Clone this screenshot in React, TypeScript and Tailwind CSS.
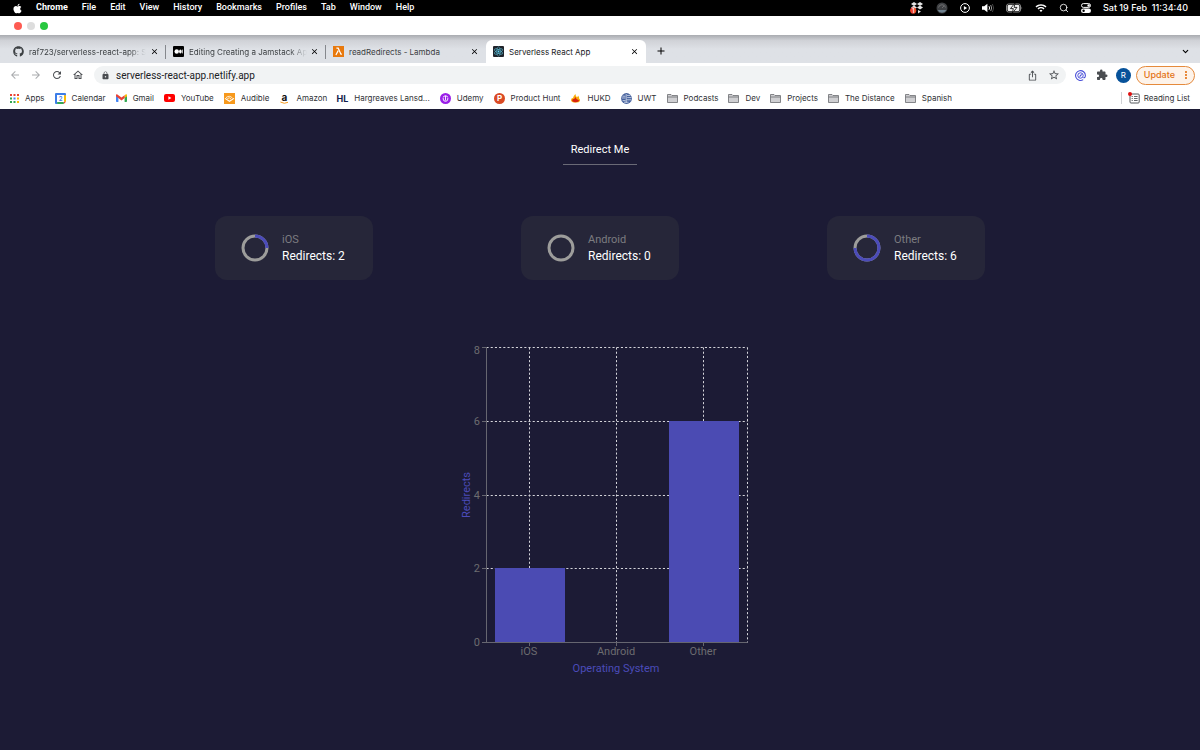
import type { ReactNode } from "react";
import { FaApple, FaGithub } from "react-icons/fa";
import {
  MdArrowBack,
  MdArrowForward,
  MdRefresh,
  MdLock,
  MdExtension,
  MdStarBorder,
  MdIosShare,
  MdOutlineHome,
  MdWifi,
  MdMoreVert,
  MdClose,
  MdAdd,
} from "react-icons/md";
import { ChevronDown, Search } from "lucide-react";

const menus = ["File", "Edit", "View", "History", "Bookmarks", "Profiles", "Tab", "Window", "Help"];

const stats = [
  { name: "iOS", redirects: 2 },
  { name: "Android", redirects: 0 },
  { name: "Other", redirects: 6 },
];

const total = stats.reduce((sum, s) => sum + s.redirects, 0);

/* Menu bar icons */

function DropboxIcon() {
  return (
    <svg className="h-3 w-[14px]" viewBox="0 0 14 12" aria-hidden="true">
      <path
        d="M4 0l3 2-3 2-3-2zM10 0l3 2-3 2-3-2zM4 3.6l3 2-3 2-3-2zM10 3.6l3 2-3 2-3-2zM8 8l3 1.4L8 11.4z"
        fill="#e5e5e5"
      />
      <circle cx="3.2" cy="8.6" r="3.1" fill="#f0442c" />
      <text x="3.2" y="10.7" fontSize="6" textAnchor="middle" fill="#fff">
        1
      </text>
    </svg>
  );
}

function GaugeIcon() {
  return (
    <svg className="h-3 w-3" viewBox="0 0 12 12" aria-hidden="true">
      <circle cx="6" cy="6" r="5.5" fill="#3f4144" />
      <path d="M1.6 8h8.8A5 5 0 0 1 1.6 8z" fill="#6f8290" />
      <path d="M2.5 5.5a3.6 3.6 0 0 1 7 0M6 6l2-2" stroke="#777" strokeWidth=".8" fill="none" />
    </svg>
  );
}

function PlayIcon() {
  return (
    <svg className="h-[10px] w-[10px]" viewBox="0 0 10 10" aria-hidden="true">
      <circle cx="5" cy="5" r="4.4" fill="none" stroke="#fff" />
      <path d="M3.9 3L7.1 5 3.9 7z" fill="#fff" />
    </svg>
  );
}

function VolumeIcon() {
  return (
    <svg className="h-[10px] w-3" viewBox="0 0 12 10" fill="none" aria-hidden="true">
      <path d="M0 3.3h2.2L5.4.8v8.4L2.2 6.7H0z" fill="#fff" />
      <path d="M7 3.2q1.2 1.8 0 3.6" stroke="#fff" />
      <path d="M8.7 2q2 3 0 6" stroke="#999" />
      <path d="M10.4 1q2.6 4 0 8" stroke="#555" strokeWidth=".8" />
    </svg>
  );
}

function BatteryIcon() {
  return (
    <svg className="h-[10px] w-[17px]" viewBox="0 0 17 10" aria-hidden="true">
      <rect x=".5" y="1" width="14" height="8" rx="2" fill="none" stroke="#888" />
      <rect x="1.6" y="2.1" width="11.8" height="5.8" rx="1" fill="#eee" />
      <path d="M9 0L4.5 5.6h2.8L6.4 10 11 4.4H8.1z" fill="#fff" stroke="#000" strokeWidth=".8" />
      <path d="M15.5 3.5q1.4 1.5 0 3z" fill="#888" />
    </svg>
  );
}

function ControlCenterIcon() {
  return (
    <svg className="h-[10px] w-[10px]" viewBox="0 0 10 10" aria-hidden="true">
      <rect x=".5" y=".6" width="9" height="3.8" rx="1.9" fill="none" stroke="#fff" />
      <circle cx="7.6" cy="2.5" r="1.2" fill="#fff" />
      <rect x="0" y="5.4" width="10" height="4.6" rx="2.3" fill="#fff" />
      <circle cx="2.6" cy="7.7" r="1.2" fill="#000" />
    </svg>
  );
}

/* Tab favicons */

function MediumIcon() {
  return (
    <svg className="h-[11px] w-[11px]" viewBox="0 0 11 11" aria-hidden="true">
      <rect width="11" height="11" rx="1" />
      <circle cx="3.7" cy="5.5" r="2.2" fill="#fff" />
      <ellipse cx="7.4" cy="5.5" rx="1.3" ry="2.1" fill="#fff" />
      <rect x="9.1" y="3.6" width=".7" height="3.8" fill="#fff" />
    </svg>
  );
}

function LambdaIcon() {
  return (
    <svg className="h-[11px] w-[11px]" viewBox="0 0 11 11" aria-hidden="true">
      <rect width="11" height="11" fill="#e8790d" />
      <path d="M3.4 2.2h1.8l2.7 6h1M5.2 4.6L2.9 9" fill="none" stroke="#fff" strokeWidth="1.2" />
    </svg>
  );
}

function ReactIcon() {
  return (
    <svg className="h-[11px] w-[11px]" viewBox="0 0 11 11" aria-hidden="true">
      <rect width="11" height="11" rx="1" fill="#20232a" />
      <g fill="none" stroke="#56b6cf" strokeWidth=".6">
        <ellipse cx="5.5" cy="5.5" rx="4.6" ry="1.8" transform="rotate(30 5.5 5.5)" />
        <ellipse cx="5.5" cy="5.5" rx="4.6" ry="1.8" transform="rotate(90 5.5 5.5)" />
        <ellipse cx="5.5" cy="5.5" rx="4.6" ry="1.8" transform="rotate(150 5.5 5.5)" />
      </g>
      <circle cx="5.5" cy="5.5" r=".9" fill="#61dafb" />
    </svg>
  );
}

/* Bookmark icons */

function AppsIcon() {
  const colors = ["#ea4335", "#ea4335", "#ea4335", "#34a853", "#4285f4", "#fbbc04", "#34a853", "#34a853", "#fbbc04"];
  return (
    <svg className="h-[9px] w-[9px]" viewBox="0 0 9 9" aria-hidden="true">
      {colors.map((c, i) => (
        <rect key={i} x={(i % 3) * 3.5} y={Math.floor(i / 3) * 3.5} width="2" height="2" fill={c} />
      ))}
    </svg>
  );
}

function CalendarIcon() {
  return (
    <svg className="h-[11px] w-[11px]" viewBox="0 0 11 11" aria-hidden="true">
      <path d="M0 1a1 1 0 0 1 1-1h9a1 1 0 0 1 1 1v1.8H2.6V11H1a1 1 0 0 1-1-1z" fill="#3c7de8" />
      <path d="M9 2.2h2v6.6H9z" fill="#fbbc04" />
      <path d="M2.2 9h6.6v2H2.2z" fill="#34a853" />
      <path d="M8.8 8.8H11L8.8 11z" fill="#ea4335" />
      <path d="M2 2h7v7H2z" fill="#fff" />
      <text x="5.5" y="7.8" fontSize="6" fontWeight="600" textAnchor="middle" fill="#3c7de8">
        2
      </text>
    </svg>
  );
}

function GmailIcon() {
  return (
    <svg className="h-2 w-[11px]" viewBox="0 0 11 8" aria-hidden="true">
      <path d="M0 1.2L2.4 3v5H.8A.8.8 0 0 1 0 7.2z" fill="#4285f4" />
      <path d="M11 1.2L8.6 3v5h1.6a.8.8 0 0 0 .8-.8z" fill="#34a853" />
      <path d="M8.6 1.2L10 .2q1-.3 1 .9v1.2L8.6 4z" fill="#fbbc04" />
      <path d="M0 1.1Q0-.1 1 .2l4.5 3.4L8.6 1.2V4L5.5 6.4 0 2.3z" fill="#ea4335" />
    </svg>
  );
}

function YouTubeIcon() {
  return (
    <svg className="h-2 w-[11px]" viewBox="0 0 11 8" aria-hidden="true">
      <rect width="11" height="8" rx="2" fill="#f00" />
      <path d="M4.4 2.2L7.4 4l-3 1.8z" fill="#fff" />
    </svg>
  );
}

function AudibleIcon() {
  return (
    <svg className="h-[11px] w-[11px]" viewBox="0 0 11 11" aria-hidden="true">
      <rect width="11" height="11" fill="#f7991c" />
      <path d="M1 5.4l4.5 2.9L10 5.4" fill="none" stroke="#fff" strokeWidth="1.1" />
      <path d="M2 4.7q3.4-3 6.6.5M3.4 5.5q2.2-1.6 3.8.6" fill="none" stroke="#fff" strokeWidth=".8" />
    </svg>
  );
}

function AmazonIcon() {
  return (
    <svg className="h-[11px] w-[11px] overflow-visible" viewBox="0 0 11 11" aria-hidden="true">
      <text x="5.5" y="7.5" fontSize="10" fontWeight="700" textAnchor="middle" fill="#111">
        a
      </text>
      <path d="M1.4 9q4 2.4 7.6.3" fill="none" stroke="#f79b1e" strokeWidth="1" />
    </svg>
  );
}

function HlIcon() {
  return (
    <svg className="h-[11px] w-[11px] overflow-visible" viewBox="0 0 11 11" aria-hidden="true">
      <text x="5.5" y="9" fontSize="9" fontWeight="700" textAnchor="middle" fill="#12204d">
        HL
      </text>
    </svg>
  );
}

function UdemyIcon() {
  return (
    <svg className="h-[11px] w-[11px]" viewBox="0 0 11 11" aria-hidden="true">
      <circle cx="5.5" cy="5.5" r="5.5" fill="#9a1fe8" />
      <path d="M3.2 4.6V6a2.3 2.3 0 0 0 4.6 0V4.6M5.5 7.5V3M3.2 3.8l2.3-1.2 2.3 1.2" fill="none" stroke="#fff" strokeWidth=".9" />
    </svg>
  );
}

function ProductHuntIcon() {
  return (
    <svg className="h-[11px] w-[11px]" viewBox="0 0 11 11" aria-hidden="true">
      <circle cx="5.5" cy="5.5" r="5.5" fill="#da4a24" />
      <text x="5.7" y="8.4" fontSize="8" fontWeight="700" textAnchor="middle" fill="#fff">
        P
      </text>
    </svg>
  );
}

function HukdIcon() {
  return (
    <svg className="h-[9px] w-[11px]" viewBox="0 0 11 9" aria-hidden="true">
      <path d="M1 6.2Q1 4 3 4 3.4 2 5.4 0q.3 2.4 1.6 3.2Q8 2.6 8 1.6q1.4 1.6 1.2 3.2Q10.4 5.4 10 7 9 8.8 5.6 8.6 1.2 8.6 1 6.2z" fill="#f9ae0c" />
      <path d="M2 6.2Q2.6 4.6 4.2 5 5 3.6 5.6 3q.4 2 1.6 2.4Q9.2 5.2 9 7 7 8.4 4.8 8.2 2 7.8 2 6.2z" fill="#d8220f" />
    </svg>
  );
}

function UwtIcon() {
  return (
    <svg className="h-[11px] w-[11px]" viewBox="0 0 11 11" aria-hidden="true">
      <circle cx="5.5" cy="5.5" r="5.4" fill="#46619d" />
      <path d="M1.4 3.2h3M.8 5h3.6M6 2.4h3.4M6.2 4.6h4.2M5.4 6.8h4.6M1.6 7.6h3M3 9.2h4.6M5.2 1v9" fill="none" stroke="#d8e0ef" strokeWidth=".8" />
    </svg>
  );
}

function FolderIcon() {
  return (
    <svg className="h-[9px] w-[11px]" viewBox="0 0 11 9" aria-hidden="true">
      <path d="M.5 8.5v-8H4l1 1h5.5v7z" fill="#cfcfd2" stroke="#6b6c70" strokeWidth=".8" />
      <path d="M.5 3h10" stroke="#6b6c70" strokeWidth=".8" />
    </svg>
  );
}

function ReadingListIcon() {
  return (
    <svg className="h-3 w-3" viewBox="0 0 12 12" aria-hidden="true">
      <rect x="2" y="2" width="9.2" height="9" rx="1" fill="none" stroke="#55585c" />
      <path d="M6 4.5h3.6M6 6.5h3.6M6 8.5h3.6M3.6 4.5h1.2M3.6 6.5h1.2M3.6 8.5h1.2" stroke="#55585c" strokeWidth=".9" />
      <circle cx="2" cy="2" r="2" fill="#e01010" />
    </svg>
  );
}

function SwirlIcon() {
  return (
    <svg className="h-[11px] w-[11px]" viewBox="0 0 11 11" fill="none" stroke="#4a50d8" aria-hidden="true">
      <path d="M8.2 9.6A4.9 4.9 0 1 1 10.4 5.5Q10.3 8 8.4 7.6" strokeWidth="1.1" />
      <circle cx="5.5" cy="5.5" r="2.7" />
      <path d="M6.6 4.4L4.6 6.6" strokeWidth="1.2" />
    </svg>
  );
}

const bookmarks: { label: string; icon: ReactNode }[] = [
  { label: "Apps", icon: <AppsIcon /> },
  { label: "Calendar", icon: <CalendarIcon /> },
  { label: "Gmail", icon: <GmailIcon /> },
  { label: "YouTube", icon: <YouTubeIcon /> },
  { label: "Audible", icon: <AudibleIcon /> },
  { label: "Amazon", icon: <AmazonIcon /> },
  { label: "Hargreaves Lansd...", icon: <HlIcon /> },
  { label: "Udemy", icon: <UdemyIcon /> },
  { label: "Product Hunt", icon: <ProductHuntIcon /> },
  { label: "HUKD", icon: <HukdIcon /> },
  { label: "UWT", icon: <UwtIcon /> },
  { label: "Podcasts", icon: <FolderIcon /> },
  { label: "Dev", icon: <FolderIcon /> },
  { label: "Projects", icon: <FolderIcon /> },
  { label: "The Distance", icon: <FolderIcon /> },
  { label: "Spanish", icon: <FolderIcon /> },
];

const tabs: { title: string; icon: ReactNode; active?: boolean; faded?: boolean }[] = [
  { title: "raf723/serverless-react-app: S", icon: <FaGithub className="h-[11px] w-[11px]" />, faded: true },
  { title: "Editing Creating a Jamstack Ap", icon: <MediumIcon />, faded: true },
  { title: "readRedirects - Lambda", icon: <LambdaIcon /> },
  { title: "Serverless React App", icon: <ReactIcon />, active: true },
];

function MenuBar() {
  return (
    <header className="flex h-4 items-center bg-black px-3 text-[9px] font-medium text-white">
      <FaApple className="h-[11px] w-[11px]" />
      <nav className="ml-[13px] flex items-center gap-[14px] font-['Roboto','Liberation_Sans',sans-serif]">
        <span className="font-bold">Chrome</span>
        {menus.map((m) => (
          <span key={m}>{m}</span>
        ))}
      </nav>
      <div className="ml-auto flex items-center gap-3">
        <DropboxIcon />
        <GaugeIcon />
        <PlayIcon />
        <VolumeIcon />
        <BatteryIcon />
        <MdWifi className="h-3 w-3" />
        <Search className="h-[10px] w-[10px]" />
        <ControlCenterIcon />
        <time className="whitespace-pre">Sat 19 Feb  11:34:40</time>
      </div>
    </header>
  );
}

function TabStrip() {
  return (
    <div className="flex h-7 items-end bg-linear-to-b from-[#a9abb0] via-[#d0d2d7] via-20% to-[#dee1e6] to-50% pl-[6px] text-[8px] text-[#3c4043]">
      {tabs.map((t) => (
        <div
          key={t.title}
          className={
            t.active
              ? "flex h-[23px] w-40 items-center rounded-t-md bg-white px-[7px] text-[#202124]"
              : "flex h-[23px] w-40 items-center px-[7px]"
          }
        >
          {t.icon}
          <span className={t.faded ? "ml-[5px] mask-r-from-85% whitespace-nowrap" : "ml-[5px] whitespace-nowrap"}>
            {t.title}
          </span>
          <button type="button" aria-label="Close tab" className="ml-auto text-black">
            <MdClose className="h-[9px] w-[9px]" />
          </button>
          {t.faded && <span className="-mr-[7px] ml-[6px] h-[14px] w-px bg-[#85888d]" />}
        </div>
      ))}
      <button type="button" aria-label="New tab" className="mb-[6px] ml-[9px] text-black">
        <MdAdd className="h-3 w-3" />
      </button>
      <button type="button" aria-label="Search tabs" className="mr-[10px] mb-[7px] ml-auto text-black">
        <ChevronDown className="h-[9px] w-[9px]" strokeWidth={3} />
      </button>
    </div>
  );
}

function Toolbar() {
  return (
    <div className="flex h-6 items-center bg-white pr-[5px] pl-[9px] text-[#4a4d51]">
      <div className="flex gap-[9px]">
        <button type="button" aria-label="Back" className="text-[#a9abae]">
          <MdArrowBack className="h-3 w-3" />
        </button>
        <button type="button" aria-label="Forward" className="text-[#a9abae]">
          <MdArrowForward className="h-3 w-3" />
        </button>
        <button type="button" aria-label="Reload">
          <MdRefresh className="h-3 w-3" />
        </button>
        <button type="button" aria-label="Home">
          <MdOutlineHome className="h-3 w-3" />
        </button>
      </div>
      <div className="ml-[10px] flex h-[18px] flex-1 items-center rounded-full bg-[#f1f3f4] pr-[6px] pl-[7px]">
        <MdLock className="h-[9px] w-[9px]" />
        <input
          type="text"
          aria-label="Address"
          defaultValue="serverless-react-app.netlify.app"
          className="ml-[6px] flex-1 bg-transparent font-['Roboto','Liberation_Sans',sans-serif] text-[10px] text-[#202124] outline-none"
        />
        <button type="button" aria-label="Share">
          <MdIosShare className="h-[11px] w-[11px]" />
        </button>
        <button type="button" aria-label="Bookmark this page" className="ml-[10px]">
          <MdStarBorder className="h-3 w-3" />
        </button>
      </div>
      <div className="ml-[9px] flex items-center">
        <SwirlIcon />
        <MdExtension className="ml-[10px] h-3 w-3" />
        <span className="ml-2 flex h-[15px] w-[15px] items-center justify-center rounded-full bg-[#07529a] text-[8px] text-white">
          R
        </span>
        <button
          type="button"
          className="ml-[5px] flex h-[19px] items-center rounded-full border border-[#e58a3c] bg-[#fdf3ea] pr-[2px] pl-[7px] text-[9px] font-medium text-[#e37214]"
        >
          Update
          <MdMoreVert className="ml-[5px] h-3 w-3" />
        </button>
      </div>
    </div>
  );
}

function BookmarksBar() {
  return (
    <nav className="flex h-[22px] items-center bg-white px-[10px] text-[8px] text-[#303236]">
      <div className="flex items-center gap-[10px]">
        {bookmarks.map((b) => (
          <a key={b.label} href="#" className="flex items-center gap-[6px] whitespace-nowrap">
            {b.icon}
            {b.label}
          </a>
        ))}
      </div>
      <a href="#" className="ml-auto flex items-center gap-1 border-l border-[#d0d2d5] pl-[6px] whitespace-nowrap">
        <ReadingListIcon />
        Reading List
      </a>
    </nav>
  );
}

function Ring({ value }: { value: number }) {
  return (
    <svg className="h-7 w-7" viewBox="0 0 28 28" fill="none" strokeWidth="3" aria-hidden="true">
      <circle cx="14" cy="14" r="12" stroke="#9d9d9b" />
      {value > 0 && (
        <circle
          cx="14"
          cy="14"
          r="12"
          stroke="#4b4bb9"
          pathLength={100}
          strokeDasharray={`${value} 100`}
          transform="rotate(-90 14 14)"
        />
      )}
    </svg>
  );
}

function StatCard({ name, redirects }: { name: string; redirects: number }) {
  return (
    <div className="flex h-16 w-[158px] items-center gap-[13px] rounded-xl bg-[#262639] pl-[26px]">
      <Ring value={(redirects / total) * 100} />
      <div>
        <p className="text-[11px] leading-4 text-[#7c7c80]">{name}</p>
        <p className="text-xs leading-4 text-white">Redirects: {redirects}</p>
      </div>
    </div>
  );
}

function RedirectsChart() {
  const left = 30;
  const right = 291;
  const top = 8;
  const bottom = 303;
  const band = (right - left) / stats.length;
  const y = (v: number) => Math.round(bottom - (v / 8) * (bottom - top));
  const x = (i: number) => Math.floor(left + band * (i + 0.5));

  return (
    <svg
      className="h-[345px] w-[300px] text-[11px]"
      viewBox="0 0 300 345"
      role="img"
      aria-label="Redirects by operating system"
    >
      <g stroke="#d4d4da" strokeDasharray="2.1 2.1" transform="translate(0.5 0.5)">
        {[2, 4, 6, 8].map((v) => (
          <line key={v} x1={left} x2={right} y1={y(v)} y2={y(v)} />
        ))}
        {stats.map((s, i) => (
          <line key={s.name} x1={x(i)} x2={x(i)} y1={top} y2={bottom} />
        ))}
        <line x1={right} x2={right} y1={top} y2={bottom} />
      </g>
      <g fill="#4b4bb3">
        {stats.map((s, i) => (
          <rect key={s.name} x={x(i) - 34} y={y(s.redirects)} width="70" height={bottom - y(s.redirects)} />
        ))}
      </g>
      <g stroke="#666670" shapeRendering="crispEdges">
        <path d={`M${left} ${top}V${bottom}H${right}`} fill="none" />
        {[0, 2, 4, 6, 8].map((v) => (
          <line key={v} x1={left - 4} x2={left} y1={y(v)} y2={y(v)} />
        ))}
        {stats.map((s, i) => (
          <line key={s.name} x1={x(i)} x2={x(i)} y1={bottom} y2={bottom + 4} />
        ))}
      </g>
      <g fill="#6c6c70">
        {[0, 2, 4, 6, 8].map((v) => (
          <text key={v} x={left - 6} y={v === 8 ? y(v) + 7 : y(v) + 4} textAnchor="end">
            {v}
          </text>
        ))}
        {stats.map((s, i) => (
          <text key={s.name} x={x(i)} y={bottom + 13} textAnchor="middle">
            {s.name}
          </text>
        ))}
      </g>
      <g fill="#4b4bb9" textAnchor="middle">
        <text x={x(1)} y={bottom + 30}>
          Operating System
        </text>
        <text transform="translate(14 156) rotate(-90)">Redirects</text>
      </g>
    </svg>
  );
}

export default function App() {
  return (
    <div className="flex min-h-screen flex-col bg-[#1c1b35] font-['Inter','Liberation_Sans',sans-serif]">
      <MenuBar />
      <div className="flex h-[19px] items-center gap-[5px] bg-white px-[14px]">
        <span className="h-2 w-2 rounded-full bg-[#fe5b52]" />
        <span className="h-2 w-2 rounded-full bg-[#dddddd]" />
        <span className="h-2 w-2 rounded-full bg-[#28c73f]" />
      </div>
      <TabStrip />
      <Toolbar />
      <BookmarksBar />

      <main className="flex flex-col items-center pt-[33px] font-['Roboto','Liberation_Sans',sans-serif]">
        <button type="button" className="border-b border-[#6a6a76] px-2 pb-[6px] text-[11px] leading-4 text-white">
          Redirect Me
        </button>
        <section className="mt-[51px] grid w-full max-w-[918px] grid-cols-3 justify-items-center">
          {stats.map((s) => (
            <StatCard key={s.name} name={s.name} redirects={s.redirects} />
          ))}
        </section>
        <section className="mt-[59px] ml-3">
          <RedirectsChart />
        </section>
      </main>
    </div>
  );
}
